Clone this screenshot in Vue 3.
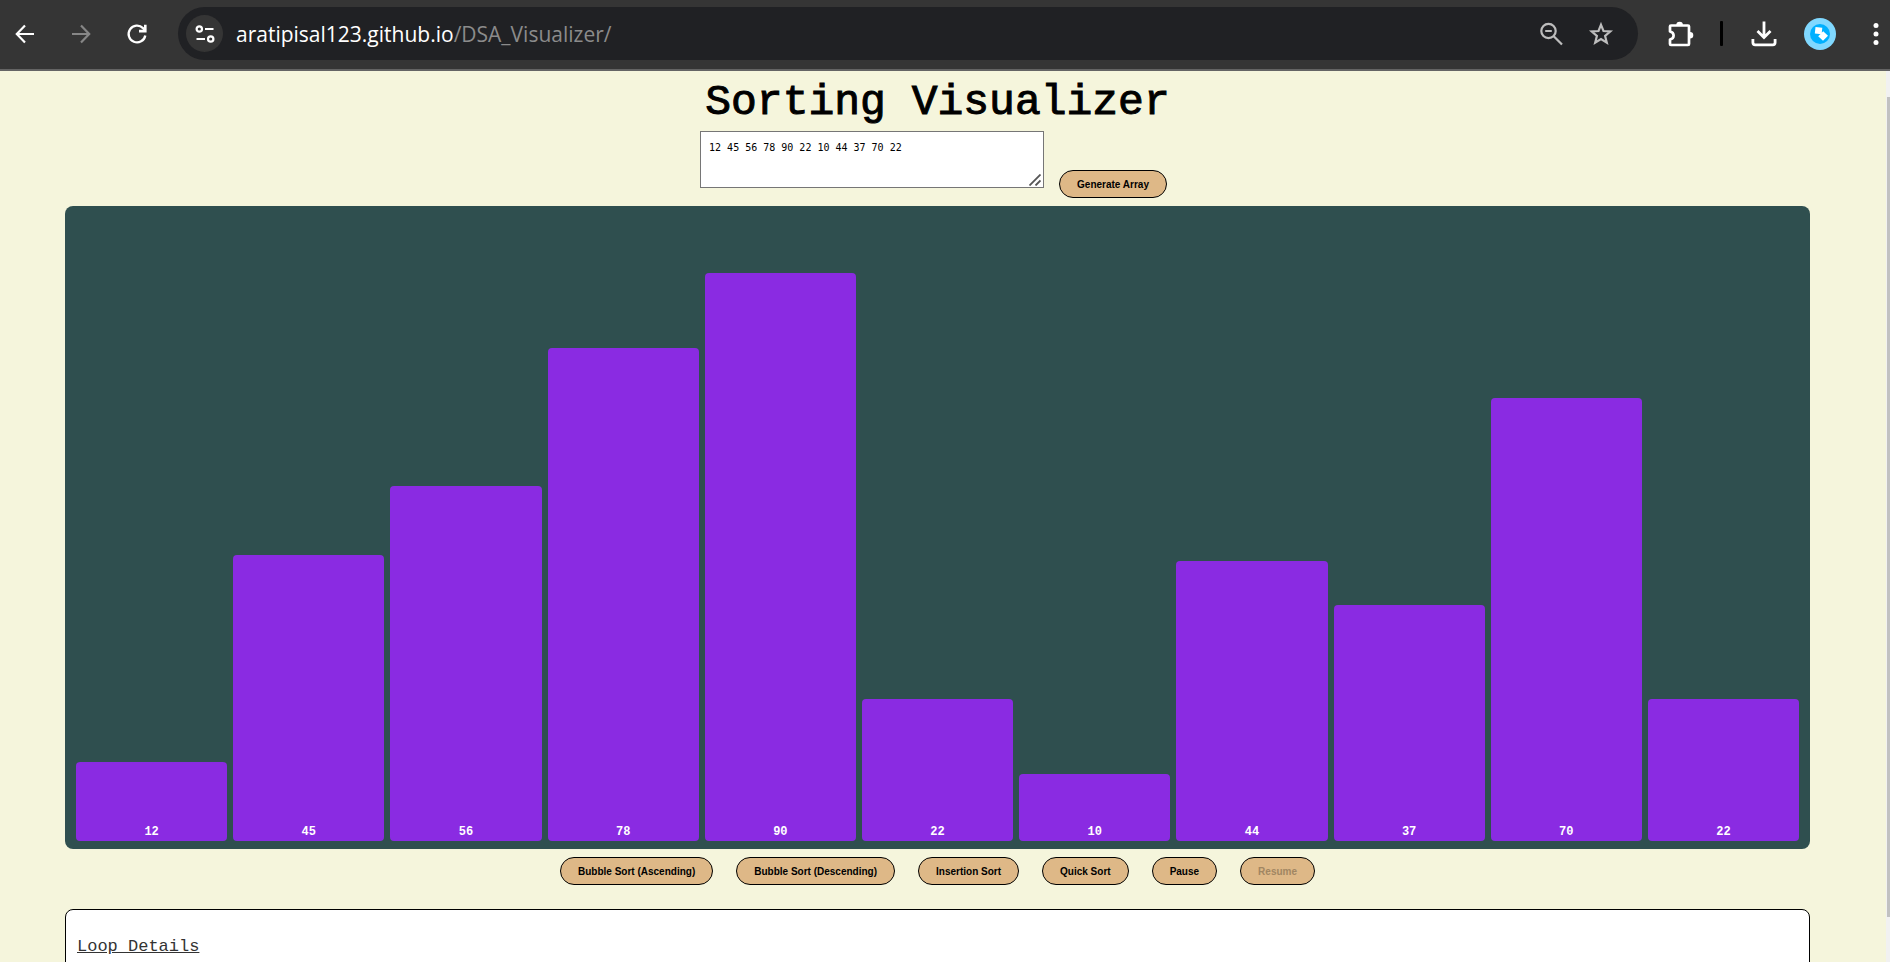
<script setup>
import { ref, computed } from 'vue'

const input = ref('12 45 56 78 90 22 10 44 37 70 22')
const values = computed(() => input.value.trim().split(/\s+/).map(Number))
const actions = [
  { label: 'Bubble Sort (Ascending)' },
  { label: 'Bubble Sort (Descending)' },
  { label: 'Insertion Sort' },
  { label: 'Quick Sort' },
  { label: 'Pause' },
  { label: 'Resume', disabled: true },
]
</script>

<template>
  <div class="browser">
    <header class="toolbar">
      <nav class="nav">
        <button type="button" aria-label="Back">
          <svg width="24" height="24" viewBox="0 0 24 24" fill="none" stroke="#fff" stroke-width="2.2"><path d="M21 12H4M12 3.5 3.8 12 12 20.5" /></svg>
        </button>
        <button type="button" aria-label="Forward">
          <svg width="24" height="24" viewBox="0 0 24 24" fill="none" stroke="#868686" stroke-width="2.2"><path d="M3 12h17M12 3.5l8.2 8.5-8.2 8.5" /></svg>
        </button>
        <button type="button" aria-label="Reload">
          <svg width="24" height="24" viewBox="0 0 24 24" fill="none" stroke="#fff" stroke-width="2.3"><path d="M20.3 13.5A8.4 8.4 0 1 1 18 6.1L20.5 8.6" /><path d="M20.3 2.8v6.3h-6.3" stroke-width="2.6" /></svg>
        </button>
      </nav>
      <div class="address">
        <button type="button" class="site" aria-label="Site information">
          <svg width="20" height="20" viewBox="0 0 20 20" fill="none" stroke="#fff" stroke-width="2.2"><circle cx="4.3" cy="5" r="2.7" /><path d="M10 5h8.500M1.500 15H10" /><circle cx="15.700" cy="15" r="2.700" /></svg>
        </button>
        <a class="url" href="#">aratipisal123.github.io<span>/DSA_Visualizer/</span></a>
        <button type="button" aria-label="Zoom">
          <svg width="26" height="26" viewBox="0 0 26 26" fill="none" stroke="#bdbdbd" stroke-width="2.200"><circle cx="10.500" cy="10" r="7.200" /><path d="M7.200 10h6.600M15.500 15l8.500 8.500" /></svg>
        </button>
        <button type="button" aria-label="Bookmark">
          <svg width="26" height="26" viewBox="0 0 26 26" fill="none" stroke="#bdbdbd" stroke-width="2.200"><path d="M13 3.800 15.500 10l6.800.5-5.200 4.400 1.700 6.800L13 18l-5.800 3.700 1.700-6.800-5.200-4.400 6.800-.5z" /></svg>
        </button>
      </div>
      <div class="tools">
        <button type="button" aria-label="Extensions">
          <svg width="28" height="28" viewBox="0 0 28 28"><path d="M5 5.500h17q1 0 1 1V24q0 1-1 1H5q-1 0-1-1v-4.500q3.600-.8 3.600-4T4 11.500v-5q0-1 1-1z" fill="none" stroke="#fff" stroke-width="2.700" stroke-linejoin="round" /><path d="M10.300 5a3.300 3.300 0 0 1 6.600 0zM24 12a3.300 3.300 0 0 1 0 6.600z" fill="#fff" /></svg>
        </button>
        <i class="divider"></i>
        <button type="button" aria-label="Downloads">
          <svg width="28" height="28" viewBox="0 0 28 28" fill="none" stroke="#fff" stroke-width="2.800"><path d="M14 1.500V17M7.500 11l6.500 6.500 6.500-6.500M2.900 19v3.500q0 2.300 2.300 2.300h17.600q2.300 0 2.300-2.300V19" /></svg>
        </button>
        <button type="button" aria-label="Profile">
          <svg width="32" height="32" viewBox="0 0 32 32"><circle cx="16" cy="16" r="16" fill="#80d8ff" /><circle cx="16" cy="16" r="10" fill="#00b0ff" /><path d="M11.500 9l6.800.8-.7 6.400-6.800-.7zM19.200 13.300l4.800 4.500-5 5-4.800-4.600z" fill="#fff" /></svg>
        </button>
        <button type="button" aria-label="Menu" class="menu">
          <svg width="6" height="24" viewBox="0 0 6 24" fill="#fff"><circle cx="3" cy="3.500" r="2.500" /><circle cx="3" cy="12" r="2.500" /><circle cx="3" cy="20.500" r="2.500" /></svg>
        </button>
      </div>
    </header>
    <div class="viewport">
      <main class="page">
        <h1>Sorting Visualizer</h1>
        <form class="entry" @submit.prevent>
          <div class="field">
            <textarea v-model="input" aria-label="Array values" spellcheck="false"></textarea>
            <svg class="grip" width="12" height="12" viewBox="0 0 12 12" fill="none" stroke="#555" stroke-width="1.800"><path d="M.5 11.500l11-11M6.500 11.500l5-5" /></svg>
          </div>
          <button type="submit" class="pill">Generate Array</button>
        </form>
        <section class="chart" aria-label="Array bars">
          <div v-for="(v, i) in values" :key="i" class="bar" :style="{ height: v + '%' }">{{ v }}</div>
        </section>
        <div class="actions">
          <button v-for="a in actions" :key="a.label" type="button" class="pill" :disabled="a.disabled">{{ a.label }}</button>
        </div>
        <section class="details">
          <h2>Loop Details</h2>
        </section>
      </main>
      <div class="track"><div class="thumb"></div></div>
    </div>
  </div>
</template>

<style>
body {
  margin: 0;
}
</style>

<style scoped>
.browser {
  height: 100vh;
  display: flex;
  flex-direction: column;
  overflow: hidden;
  background: #f5f5dc;
}
button {
  font: inherit;
  cursor: pointer;
}
.toolbar {
  flex: none;
  display: flex;
  align-items: center;
  height: 69px;
  border-bottom: 2px solid #646464;
  background: #353535;
}
.toolbar button {
  display: flex;
  padding: 0;
  border: 0;
  background: none;
}
.nav {
  display: flex;
  gap: 32px;
  padding: 0 29px 2px 13px;
}
.address {
  flex: 1;
  display: flex;
  align-items: center;
  box-sizing: border-box;
  height: 53px;
  margin-bottom: 2px;
  padding: 0 24px 0 8px;
  border-radius: 27px;
  background: #202124;
}
.address .site {
  align-items: center;
  justify-content: center;
  width: 37px;
  height: 37px;
  border-radius: 50%;
  background: #353535;
}
.url {
  flex: 1;
  margin-left: 13px;
  color: #fff;
  font: 21px/28px "Open Sans", "Noto Sans", sans-serif;
  text-decoration: none;
}
.url span {
  color: #8b8b8b;
}
.address button + button {
  margin-left: 24px;
}
.tools {
  display: flex;
  align-items: center;
  padding: 0 11px 2px 28px;
}
.divider {
  width: 3px;
  height: 25px;
  margin: 0 27px 0 26px;
  border-radius: 1px;
  background: #000;
}
.tools .divider + button {
  margin-right: 26px;
}
.tools .menu {
  margin-left: 37px;
}
.viewport {
  flex: 1;
  min-height: 0;
  display: flex;
}
.page {
  flex: 1;
  padding: 0 76px 0 65px;
  overflow: hidden;
}
h1 {
  margin: 7px 0 0;
  color: #000;
  font: 400 43px/50px "Liberation Mono", monospace;
  -webkit-text-stroke: 1px #000;
  text-align: center;
}
.entry {
  display: flex;
  justify-content: center;
  align-items: flex-end;
  gap: 15px;
  margin: 3px 0 8px;
  padding-right: 8px;
}
.field {
  position: relative;
  display: flex;
  margin-bottom: 10px;
}
textarea {
  box-sizing: border-box;
  width: 344px;
  height: 57px;
  padding: 8px;
  border: 1px solid #767676;
  background: #fff;
  color: #000;
  font: 10px/16px "DejaVu Sans Mono", monospace;
  resize: none;
}
.grip {
  position: absolute;
  right: 3px;
  bottom: 2px;
  pointer-events: none;
}
.pill {
  height: 28px;
  padding: 2px 17px 0;
  border: 1px solid #000;
  border-radius: 14px;
  background: #deb887;
  color: #000;
  font: bold 10px/14px "Liberation Sans", Arial, sans-serif;
}
.pill:disabled {
  color: #a18662;
}
.chart {
  display: flex;
  align-items: flex-end;
  box-sizing: border-box;
  height: 643px;
  padding: 8px;
  border-radius: 8px;
  background: #2f4f4f;
}
.bar {
  flex: 1;
  display: flex;
  align-items: flex-end;
  justify-content: center;
  margin: 0 3px;
  padding-bottom: 4px;
  border-radius: 4px;
  background: #8a2be2;
  color: #fff;
  font: bold 12px/10px "Liberation Mono", monospace;
}
.actions {
  display: flex;
  justify-content: center;
  gap: 23px;
  padding: 8px 0 24px;
}
.details {
  min-height: 240px;
  padding: 24px 11px;
  border: 1px solid #000;
  border-radius: 8px;
  background: #fff;
}
h2 {
  margin: 0;
  color: #333;
  font: 400 17px/26px "Liberation Mono", monospace;
  text-decoration: underline;
}
.track {
  width: 4px;
  padding-top: 26px;
  background: #f1f1f1;
}
.thumb {
  height: 820px;
  margin-left: 1px;
  background: #c1c1c1;
}
</style>
